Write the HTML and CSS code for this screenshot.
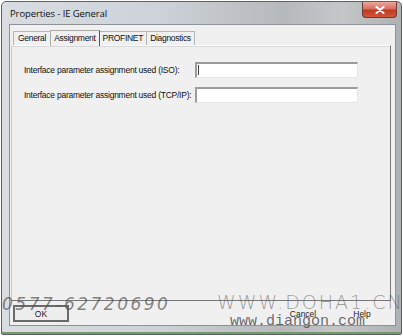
FILE: index.html
```html
<!DOCTYPE html>
<html>
<head>
<meta charset="utf-8">
<link rel="stylesheet" href="styles.css">
</head>
<body>
<div class="window">
  <div class="titlebar">
    <span class="title">Properties - IE General</span>
    <span class="close"><svg width="10" height="8" viewBox="0 0 10 8"><path d="M1.5 1 L8.5 7 M8.5 1 L1.5 7" stroke="#fff" stroke-width="2" stroke-linecap="round"/></svg></span>
  </div>
  <div class="client">
    <div class="tabs">
      <span class="tab">General</span>
      <span class="tab active">Assignment</span>
      <span class="tab">PROFINET</span>
      <span class="tab">Diagnostics</span>
    </div>
    <div class="panel">
      <div class="row">
        <span class="label">Interface parameter assignment used (ISO):</span>
        <span class="field"><span class="caret"></span></span>
      </div>
      <div class="row">
        <span class="label">Interface parameter assignment used (TCP/IP):</span>
        <span class="field"></span>
      </div>
    </div>
    <div class="buttons">
      <span class="btn ok">OK</span>
      <span class="spacer"></span>
      <span class="btn cancel">Cancel</span>
      <span class="btn help">Help</span>
    </div>
  </div>
  <div class="wm wm-phone">0577-62720690</div>
  <div class="wm wm-site">WWW.DOHA1.CN</div>
  <div class="wm wm-url">www.diangon.com</div>
</div>
</body>
</html>
```

FILE: styles.css
```css
* { box-sizing: border-box; }
html, body { margin: 0; padding: 0; background: #fff; }
body { width: 403px; height: 336px; overflow: hidden; font-family: "Liberation Sans", Arial, sans-serif; }
.window {
  position: relative;
  width: 401px;
  height: 334px;
  margin: 1px;
  border: 1px solid #5c6066;
  border-radius: 5px 5px 2px 2px;
  background: linear-gradient(90deg, #d9dde2 0%, #ccd2d8 40%, #b6b9bc 70%, #c4c6c8 85%, #aeb1b4 100%);
  padding: 0 5px 8px 7px;
  display: flex;
  flex-direction: column;
  box-shadow: inset 0 -2px 0 #6f9a6b;
}
.titlebar {
  height: 22px;
  display: flex;
  align-items: center;
  justify-content: space-between;
}
.title { font-family: "Open Sans", "Liberation Sans", sans-serif; font-size: 9.5px; color: #111; padding-left: 1px; letter-spacing: -0.1px; }
.close {
  align-self: flex-start;
  width: 35px;
  height: 16px;
  margin-right: -1px;
  border: 1px solid #6d3a34;
  border-top: none;
  border-radius: 0 0 4px 4px;
  background: linear-gradient(180deg, #e9a99c 0%, #d8705e 45%, #c2391f 55%, #d0553b 100%);
  display: flex; align-items: center; justify-content: center;
}
.client {
  flex: 1;
  background: #f0f0f0;
  border: 1px solid #8e9296;
  display: flex;
  flex-direction: column;
  padding: 4px 4px 0 1px;
  font-size: 8.5px;
  color: #111;
}
.tabs { display: flex; height: 16px; align-items: flex-end; padding-left: 2px; }
.tab {
  height: 14px;
  padding: 0 3px;
  border: 1px solid #b5b5b5;
  border-bottom: none;
  border-left: none;
  line-height: 13px;
  background: #f0f0f0;
  letter-spacing: -0.3px;
}
.tab:first-child { border-left: 1px solid #b5b5b5; border-right: none; padding: 0 4px; }
.tab.active { height: 16px; border-left: 1px solid #fff; border-color: #aaa; border-right: 1px solid #555; position: relative; top: 1px; z-index: 1; line-height: 14px; padding: 0 3px; background: #f0f0f0; }
.panel {
  height: 256px;
  border: 1px solid #c8c8c8;
  border-right: 1px solid #777;
  border-bottom: 1px solid #777;
  border-top-color: #fff;
  box-shadow: inset 0 1px 0 #d8d8d8;
  padding: 16px 0 0 12px;
  display: flex;
  flex-direction: column;
  gap: 9px;
}
.row { display: flex; align-items: center; height: 16px; }
.label { width: 171px; letter-spacing: -0.25px; }
.field {
  width: 163px;
  height: 16px;
  background: #fff;
  border-top: 2px solid #9c9c9c;
  border-left: 2px solid #9c9c9c;
  border-right: 1px solid #e6e6e6;
  border-bottom: 1px solid #e6e6e6;
  position: relative;
}
.caret { position: absolute; left: 1px; top: 1px; width: 1px; height: 10px; background: #444; }
.buttons { display: flex; align-items: center; padding: 4px 0 0 2px; gap: 0; }
.spacer { flex: 1; }
.btn {
  height: 17px;
  display: flex; align-items: center; justify-content: center;
  border: 1px solid #707070;
  background: #ededed;
  font-size: 8.5px;
  color: #222;
}
.ok { width: 56px; border: 2px solid #6a6a6a; }
.cancel { width: 60px; border-color: transparent; background: transparent; }
.help { width: 58px; border-color: transparent; background: transparent; }
.wm { position: absolute; color: rgba(90,90,90,0.75); pointer-events: none; white-space: nowrap; }
.wm-phone { left: 0px; top: 292px; font-family: "DejaVu Sans", sans-serif; font-size: 17px; font-style: italic; font-weight: 200; letter-spacing: 2.5px; color: rgba(80,80,80,0.7); }
.wm-site { left: 215px; top: 289px; font-family: "DejaVu Sans", sans-serif; font-size: 19px; letter-spacing: 2px; color: rgba(100,100,100,0.6); font-weight: 200; }
.wm-url { left: 228px; top: 311px; font-family: "Liberation Mono", monospace; font-size: 15px; color: rgba(60,60,60,0.75); }
```
